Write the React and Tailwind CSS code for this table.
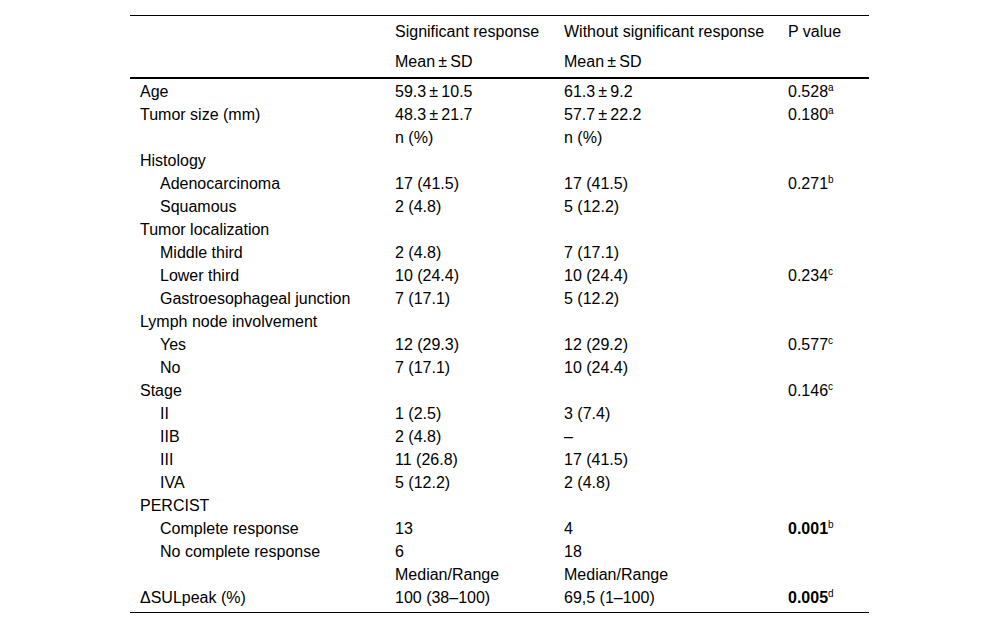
import React from 'react';

const rows = [
  { label: 'Age', a: '59.3\u2009±\u200910.5', b: '61.3\u2009±\u20099.2', p: '0.528', sup: 'a' },
  { label: 'Tumor size (mm)', a: '48.3\u2009±\u200921.7', b: '57.7\u2009±\u200922.2', p: '0.180', sup: 'a' },
  { label: '', a: 'n (%)', b: 'n (%)' },
  { label: 'Histology' },
  { label: 'Adenocarcinoma', indent: true, a: '17 (41.5)', b: '17 (41.5)', p: '0.271', sup: 'b' },
  { label: 'Squamous', indent: true, a: '2 (4.8)', b: '5 (12.2)' },
  { label: 'Tumor localization' },
  { label: 'Middle third', indent: true, a: '2 (4.8)', b: '7 (17.1)' },
  { label: 'Lower third', indent: true, a: '10 (24.4)', b: '10 (24.4)', p: '0.234', sup: 'c' },
  { label: 'Gastroesophageal junction', indent: true, a: '7 (17.1)', b: '5 (12.2)' },
  { label: 'Lymph node involvement' },
  { label: 'Yes', indent: true, a: '12 (29.3)', b: '12 (29.2)', p: '0.577', sup: 'c' },
  { label: 'No', indent: true, a: '7 (17.1)', b: '10 (24.4)' },
  { label: 'Stage', p: '0.146', sup: 'c' },
  { label: 'II', indent: true, a: '1 (2.5)', b: '3 (7.4)' },
  { label: 'IIB', indent: true, a: '2 (4.8)', b: '–' },
  { label: 'III', indent: true, a: '11 (26.8)', b: '17 (41.5)' },
  { label: 'IVA', indent: true, a: '5 (12.2)', b: '2 (4.8)' },
  { label: 'PERCIST' },
  { label: 'Complete response', indent: true, a: '13', b: '4', p: '0.001', sup: 'b', bold: true },
  { label: 'No complete response', indent: true, a: '6', b: '18' },
  { label: '', a: 'Median/Range', b: 'Median/Range' },
  { label: 'ΔSULpeak (%)', a: '100 (38–100)', b: '69,5 (1–100)', p: '0.005', sup: 'd', bold: true },
];

function PVal({ p, sup, bold }) {
  if (!p) return null;
  return (
    <span className={bold ? 'font-bold' : ''}>
      {p}
      <sup className="text-[10px] font-normal relative -top-[6px] align-baseline">{sup}</sup>
    </span>
  );
}

export default function App() {
  return (
    <div className="w-[1000px] h-[630px] bg-white pt-[15px] text-[16px] text-black" style={{ fontFamily: '"Liberation Sans", Arial, sans-serif' }}>
      <table className="ml-[130px] w-[739px] table-fixed border-collapse">
        <colgroup>
          <col className="w-[255px]" />
          <col className="w-[169px]" />
          <col className="w-[224px]" />
          <col className="w-[91px]" />
        </colgroup>
        <thead className="border-t border-black">
          <tr className="h-[31px]">
            <th></th>
            <th className="pl-[10px] pt-[1px] text-left font-normal align-middle">Significant response</th>
            <th className="pl-[10px] pt-[1px] text-left font-normal align-middle">Without significant response</th>
            <th className="pl-[10px] pt-[1px] text-left font-normal align-middle">P value</th>
          </tr>
          <tr className="h-[31px] border-b-2 border-black">
            <th></th>
            <th className="pl-[10px] pt-[1px] text-left font-normal align-middle">{'Mean\u2009±\u2009SD'}</th>
            <th className="pl-[10px] pt-[1px] text-left font-normal align-middle">{'Mean\u2009±\u2009SD'}</th>
            <th></th>
          </tr>
        </thead>
        <tbody className="border-b border-black">
          {rows.map((r, i) => (
            <tr key={i} className={i === rows.length - 1 ? 'h-[28px] align-top' : 'h-[23px]'}>
              <td className={`${r.indent ? 'pl-[30px]' : 'pl-[10px]'} pt-[2px] leading-[21px] whitespace-nowrap`}>{r.label}</td>
              <td className="pl-[10px] pt-[2px] leading-[21px] whitespace-nowrap">{r.a}</td>
              <td className="pl-[10px] pt-[2px] leading-[21px] whitespace-nowrap">{r.b}</td>
              <td className="pl-[10px] pt-[2px] leading-[21px] whitespace-nowrap">
                <PVal p={r.p} sup={r.sup} bold={r.bold} />
              </td>
            </tr>
          ))}
        </tbody>
      </table>
    </div>
  );
}
